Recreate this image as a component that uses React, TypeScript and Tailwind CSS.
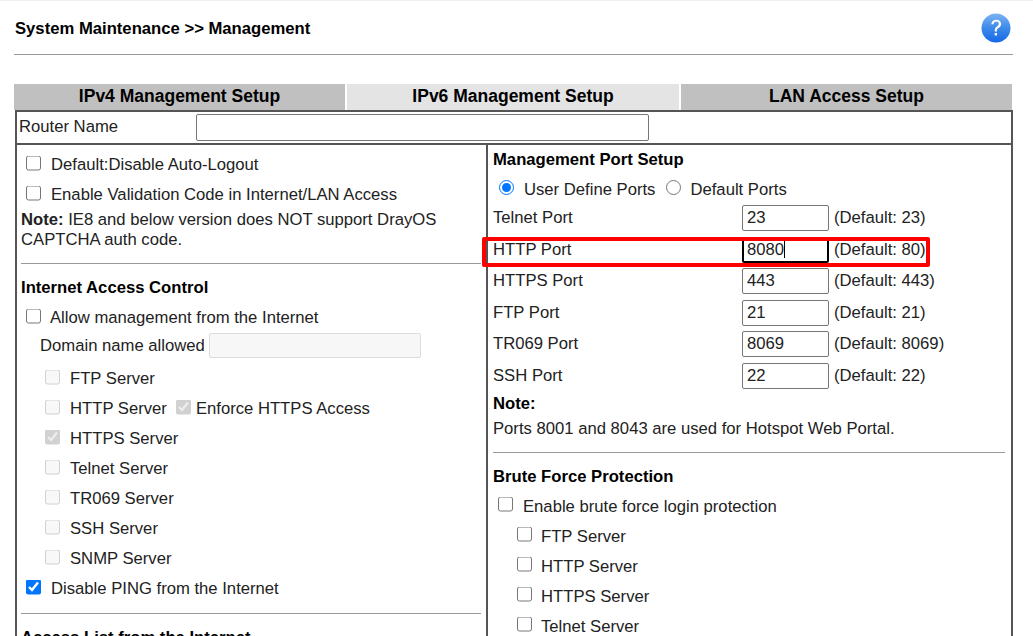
import React from "react";

const Box = ({ checked = false, disabled = false }: { checked?: boolean; disabled?: boolean }) => (
  <input
    type="checkbox"
    defaultChecked={checked}
    disabled={disabled}
    className="w-[15px] h-[15px] m-0 shrink-0 -translate-y-[2.5px]"
  />
);

const Check = ({ label, checked, disabled }: { label: string; checked?: boolean; disabled?: boolean }) => (
  <div className="flex items-center h-[30px] pl-[9px] gap-[10px]">
    <Box checked={checked} disabled={disabled} />
    <span>{label}</span>
  </div>
);

const Sub = ({ label, checked, disabled, children }: { label: string; checked?: boolean; disabled?: boolean; children?: React.ReactNode }) => (
  <div className="flex items-center h-[30px] pl-[28px] gap-[10px]">
    <Box checked={checked} disabled={disabled} />
    <span>{label}</span>
    {children}
  </div>
);

const Port = ({ label, value, def, focus }: { label: string; value: string; def: string; focus?: boolean }) => (
  <div className="flex items-center h-[31.6px]">
    <span className="w-[249px]">{label}</span>
    <div className="relative">
      <input
        readOnly
        value={value}
        className={
          focus
            ? "block w-[87px] h-[26px] px-[3px] rounded-[2px] border-2 border-black bg-white outline-none"
            : "block w-[87px] h-[26px] px-[4px] rounded-[2px] border border-[#767676] bg-white outline-none"
        }
      />
      {focus && <div className="absolute left-[42px] top-[3px] w-px h-[18px] bg-black" />}
    </div>
    <span className="ml-[5px]">{def}</span>
  </div>
);

export default function App() {
  return (
    <div
      className="relative h-[636px] w-[1033px] overflow-hidden bg-white text-[16.67px] leading-[20px] text-[#222222] border-t border-[#f0f0f0]"
      style={{ fontFamily: '"Liberation Sans", Arial, sans-serif' }}
    >
      <div className="ml-[14px] w-[999px]">
        <div className="flex items-center justify-between h-[53px] pl-px">
          <h1 className="font-bold text-black pt-[3px]">System Maintenance &gt;&gt; Management</h1>
          <svg width="30" height="30" viewBox="0 0 30 30" className="mr-[2px] mt-px" aria-label="help">
            <defs>
              <linearGradient id="g" x1="0" y1="0" x2="0" y2="1">
                <stop offset="0" stopColor="#7db4f2" />
                <stop offset="0.5" stopColor="#3d8aea" />
                <stop offset="1" stopColor="#1668e8" />
              </linearGradient>
            </defs>
            <circle cx="15" cy="15" r="14.5" fill="url(#g)" />
            <path d="M10.3 11.2c.3-2.8 2.2-4.4 5-4.4 2.9 0 4.8 1.7 4.8 4.1 0 1.9-1 2.9-2.4 3.9-1.3.9-1.8 1.6-1.8 3.1v.5h-2.1v-.9c0-1.9.7-2.9 2.1-4 1.3-1 1.9-1.6 1.9-2.7 0-1.3-1-2.2-2.5-2.2-1.6 0-2.6 1-2.8 2.6z" fill="#fff" />
            <rect x="13.7" y="20" width="2.3" height="2.5" fill="#fff" />
          </svg>
        </div>
        <div className="h-px bg-[#999999]" />

        <div className="flex gap-[2px] mt-[29px] h-[26px] w-[998px] text-[17.5px] leading-[24px] font-bold text-black text-center">
          <div className="w-[331px] bg-[#c0c0c0]">IPv4 Management Setup</div>
          <div className="w-[332px] bg-[#e4e4e4]">IPv6 Management Setup</div>
          <div className="w-[331px] bg-[#c0c0c0]">LAN Access Setup</div>
        </div>

        <div className="ml-px h-[600px] border-2 border-[#555555]">
          <div className="flex items-center h-[33px] border-b-2 border-[#555555] pl-[2px]">
            <span className="w-[177px] pb-[2px]">Router Name</span>
            <input readOnly className="w-[453px] h-[27px] rounded-[2px] border border-[#767676] bg-white" />
          </div>
          <div className="flex h-[560px]">
            <div className="w-[469px] border-r-2 border-[#555555] box-content pt-[5px]">
              <Check label="Default:Disable Auto-Logout" />
              <Check label="Enable Validation Code in Internet/LAN Access" />
              <p className="pl-[4px] pr-[20px]">
                <b className="font-bold">Note:</b> IE8 and below version does NOT support DrayOS CAPTCHA auth code.
              </p>
              <div className="mt-[13px] ml-[4px] mr-[5px] h-px bg-[#999999]" />
              <h2 className="mt-[12px] ml-[4px] h-[24px] leading-[24px] font-bold text-black">Internet Access Control</h2>
              <div className="mt-[3px] flex items-center h-[30px] pl-[9px] gap-[9px]">
                <Box />
                <span>Allow management from the Internet</span>
              </div>
              <div className="-mt-[2px] flex items-center h-[29px] pl-[23px] gap-[4px]">
                <span>Domain name allowed</span>
                <input disabled className="w-[212px] h-[25px] rounded-[2px] border border-[#dcdcdc] bg-[#f7f7f7]" />
              </div>
              <div className="mt-[4px]">
                <Sub label="FTP Server" disabled />
                <Sub label="HTTP Server" disabled>
                  <div className="flex items-center gap-[5px] -ml-px">
                    <Box checked disabled />
                    <span>Enforce HTTPS Access</span>
                  </div>
                </Sub>
                <Sub label="HTTPS Server" checked disabled />
                <Sub label="Telnet Server" disabled />
                <Sub label="TR069 Server" disabled />
                <Sub label="SSH Server" disabled />
                <Sub label="SNMP Server" disabled />
              </div>
              <Check label="Disable PING from the Internet" checked />
              <div className="mt-[9px] ml-[4px] mr-[5px] h-px bg-[#999999]" />
              <h2 className="mt-[12px] ml-[4px] h-[24px] leading-[24px] font-bold text-black">Access List from the Internet</h2>
            </div>
            <div className="flex-1 pl-[5px] pr-[6px] pt-[2px]">
              <h2 className="h-[26px] leading-[26px] font-bold text-black">Management Port Setup</h2>
              <div className="flex items-center h-[29.2px] pl-[6px]">
                <input type="radio" name="p" defaultChecked className="w-[15px] h-[15px] m-0" />
                <span className="ml-[10px] pt-[4px]">User Define Ports</span>
                <input type="radio" name="p" className="w-[15px] h-[15px] m-0 ml-[11px]" />
                <span className="ml-[9px] pt-[4px]">Default Ports</span>
              </div>
              <Port label="Telnet Port" value="23" def="(Default: 23)" />
              <Port label="HTTP Port" value="8080" def="(Default: 80)" focus />
              <Port label="HTTPS Port" value="443" def="(Default: 443)" />
              <Port label="FTP Port" value="21" def="(Default: 21)" />
              <Port label="TR069 Port" value="8069" def="(Default: 8069)" />
              <Port label="SSH Port" value="22" def="(Default: 22)" />
              <div className="h-[24px] leading-[24px] font-bold text-black">Note:</div>
              <div className="h-[26px] leading-[26px]">Ports 8001 and 8043 are used for Hotspot Web Portal.</div>
              <div className="mt-[10px] h-px bg-[#999999]" />
              <h2 className="mt-[12px] h-[24px] leading-[24px] font-bold text-black">Brute Force Protection</h2>
              <div className="mt-[3px] flex items-center h-[30px] pl-[5px] gap-[10px]">
                <Box />
                <span>Enable brute force login protection</span>
              </div>
              {["FTP Server", "HTTP Server", "HTTPS Server", "Telnet Server"].map((l) => (
                <div key={l} className="flex items-center h-[30px] pl-[24px] gap-[9px]">
                  <Box />
                  <span>{l}</span>
                </div>
              ))}
            </div>
          </div>
        </div>
      </div>
      <div className="absolute left-[482px] top-[236px] w-[448px] h-[30px] border-[4px] border-[#ff0000] rounded-[2px] pointer-events-none" />
    </div>
  );
}
